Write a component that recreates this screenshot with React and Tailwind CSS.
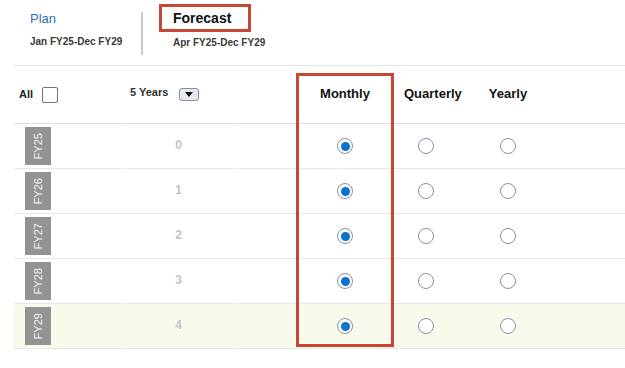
import React from "react";

const years = ["FY25", "FY26", "FY27", "FY28", "FY29"];

function Radio({ checked }) {
  return (
    <div className="w-4 h-4 rounded-full border border-[#8a8fa6] bg-white flex items-center justify-center">
      {checked && <div className="w-[9px] h-[9px] rounded-full bg-[#0a72d0]" />}
    </div>
  );
}

export default function App() {
  const cols = "grid grid-cols-[110px_111px_61px_98px_64px_100px_1fr]";
  const gapCell = "border-r-2 border-r-transparent";

  return (
    <div className="relative w-[625px] h-[368px] bg-white font-['Liberation_Sans',Arial,sans-serif] overflow-hidden">
      {/* Top tabs */}
      <div className="flex h-[65px]">
        <div className="w-[141px] pl-[30px] pt-[11px]">
          <div className="text-[13px] leading-[16px] text-[#2d6eb8]">Plan</div>
          <div className="mt-[9px] text-[10px] leading-[12px] font-bold text-[#3a3a3a]">
            Jan FY25-Dec FY29
          </div>
        </div>
        <div className="w-[2px] h-[43px] mt-[12px] bg-[#c9c9c9]" />
        <div className="ml-[16px] pt-[4px]">
          <div className="w-[92px] h-[28px] border-[3px] border-[#c74634] pl-[11px] flex items-center">
            <span className="text-[14px] font-bold text-[#111]">Forecast</span>
          </div>
          <div className="mt-[5px] pl-[14px] text-[10px] leading-[12px] font-bold text-[#3a3a3a]">
            Apr FY25-Dec FY29
          </div>
        </div>
      </div>

      {/* Table */}
      <div className="ml-[14px] border-t border-[#dfe3e8]">
        <div className={`${cols} h-[58px]`}>
          <div className={`flex items-center border-b border-b-[#d8dee6] ${gapCell} pl-[5px]`}>
            <span className="text-[11px] font-bold text-[#222]">All</span>
            <div className="ml-[9px] w-4 h-4 rounded-[2px] border border-[#6e7480] bg-white" />
          </div>
          <div className={`flex items-center border-b border-b-[#d8dee6] ${gapCell} pl-[6px] pb-[4px]`}>
            <span className="text-[11px] font-bold text-[#333]">5 Years</span>
            <div className="ml-[11px] mt-[4px] w-5 h-[13px] rounded-[3px] border border-[#8a9099] bg-[#e6eaef] flex items-center justify-center">
              <div className="w-0 h-0 border-l-[4px] border-r-[4px] border-t-[5px] border-l-transparent border-r-transparent border-t-[#111]" />
            </div>
          </div>
          <div className="border-b border-b-[#d8dee6]" />
          <div className="flex items-center justify-center border-b border-b-[#d8dee6] pb-[1px]">
            <span className="text-[13px] font-bold text-[#111]">Monthly</span>
          </div>
          <div className="flex items-center justify-start border-b border-b-[#d8dee6] pl-[10px] pb-[1px]">
            <span className="text-[13px] font-bold text-[#111] whitespace-nowrap">Quarterly</span>
          </div>
          <div className="flex items-center justify-center border-b border-b-[#d8dee6] pb-[1px]">
            <span className="text-[13px] font-bold text-[#111]">Yearly</span>
          </div>
          <div className="border-b border-b-[#d8dee6]" />
        </div>

        {years.map((fy, i) => (
          <div
            key={fy}
            className={`${cols} h-[45px] ${i === years.length - 1 ? "bg-[#f9f9ec]" : ""}`}
          >
            <div className={`flex items-center border-b border-b-[#e8e8e8] ${gapCell} pl-[11px]`}>
              <div className="w-[26px] h-[38px] bg-[#939393] flex items-center justify-center">
                <span className="-rotate-90 text-[11px] text-[#f2f2f2] whitespace-nowrap">{fy}</span>
              </div>
            </div>
            <div className={`flex items-center justify-center border-b border-b-[#e8e8e8] ${gapCell} pb-[2px]`}>
              <span className="text-[12px] font-bold text-[#c3c3cb]">{i}</span>
            </div>
            <div className="border-b border-b-[#e8e8e8]" />
            <div className="flex items-center justify-center border-b border-b-[#e8e8e8]">
              <Radio checked />
            </div>
            <div className="flex items-center justify-center border-b border-b-[#e8e8e8]">
              <Radio />
            </div>
            <div className="flex items-center justify-center border-b border-b-[#e8e8e8]">
              <Radio />
            </div>
            <div className="border-b border-b-[#e8e8e8]" />
          </div>
        ))}
      </div>

      {/* Highlight around Monthly column */}
      <div className="absolute left-[296px] top-[73px] w-[98px] h-[274px] border-[3px] border-[#c74634] pointer-events-none" />
    </div>
  );
}
